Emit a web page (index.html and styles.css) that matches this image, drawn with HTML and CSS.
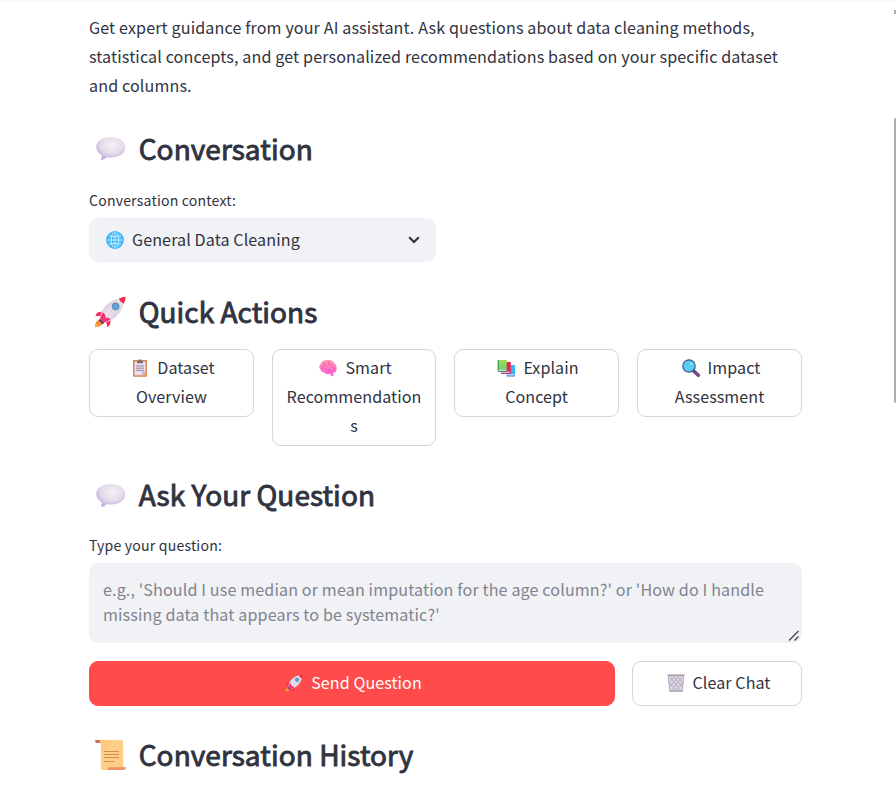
FILE: index.html
```html
<!DOCTYPE html>
<html lang="en">
<head>
<meta charset="utf-8">
<title>AI Assistant</title>
<link rel="stylesheet" href="styles.css">
</head>
<body>
<svg class="defs" aria-hidden="true">
  <defs>
    <radialGradient id="bubble" cx=".55" cy=".35" r=".7"><stop offset="0" stop-color="#f4eff6"/><stop offset=".55" stop-color="#e4dcea"/><stop offset="1" stop-color="#b9a3d6"/></radialGradient>
    <linearGradient id="hull" x1="0" y1="0" x2="1" y2="1"><stop offset="0" stop-color="#c9bccb"/><stop offset=".45" stop-color="#e8dfe9"/><stop offset="1" stop-color="#d5cbdc"/></linearGradient>
    <linearGradient id="flame" x1="1" y1="0" x2="0" y2="1"><stop offset="0" stop-color="#f0682f"/><stop offset="1" stop-color="#ffb04a"/></linearGradient>
    <linearGradient id="fin" x1="0" y1="0" x2="1" y2="1"><stop offset="0" stop-color="#f5325c"/><stop offset="1" stop-color="#fb2b86"/></linearGradient>
    <linearGradient id="brain" x1="0" y1="0" x2="0" y2="1"><stop offset="0" stop-color="#ff96a8"/><stop offset="1" stop-color="#fa5ce4"/></linearGradient>
    <linearGradient id="green" x1="0" y1="0" x2="0" y2="1"><stop offset="0" stop-color="#a5de4c"/><stop offset="1" stop-color="#69d07c"/></linearGradient>
    <linearGradient id="paper" x1="0" y1="0" x2="1" y2="1"><stop offset="0" stop-color="#ffc073"/><stop offset=".4" stop-color="#ffd08a"/><stop offset="1" stop-color="#ffcd80"/></linearGradient>
    <symbol id="i-speech" viewBox="0 0 32 32">
      <path d="M16.2 4.5C24.5 4.5 30.5 8.5 30.5 14.8S24.5 25 16.5 25C14.8 25 13.3 25 12 24.8C10.8 26.3 8.6 27.3 6.9 27.4C6.3 27.4 6.4 26.9 6.6 26.4C7.1 25.2 7.2 23.8 6.9 22.7C3.5 20.9 1.5 18 1.5 14.8C1.5 8.5 8 4.5 16.2 4.5Z" transform="translate(.7 .5)" fill="url(#bubble)"/>
    </symbol>
    <symbol id="i-rocket" viewBox="0 0 32 32">
      <path d="M5.5 23.5C2.5 24.2 1 27 .7 31.2C5 31.4 8.4 29.6 9.5 26.8Z" fill="url(#flame)"/>
      <path d="M10 15.2L4.2 16.2C2.8 17.2 1.6 18.9 1.5 20.1L7.3 20.1ZM17 22.2L16.2 27.7C15.5 29.3 14.6 30.6 13.4 31.2L12 25.2Z" fill="#f52a62"/>
      <path d="M6.1 22.5L10.4 26.9L8.8 28.1L4.9 24.3Z" fill="#40366c"/>
      <path d="M26 2.4C19 3.2 10.5 8 7 17L6 22.6L10.1 26.6L16 25C25.5 20.2 29.2 12 30 6.1Z" fill="url(#hull)"/>
      <path d="M8.5 16.4L6 22.6L10.1 26.6L16.5 23.8C15.5 21.5 13 21.5 11.5 22C11.8 20 11.5 17.5 8.5 16.4Z" fill="url(#fin)"/>
      <path d="M25 2.5C27.5 1.1 30.1 .7 31.4 1C31.7 2.7 31.1 5.4 29.8 7.4C27.8 7.1 25.5 5 25 2.5Z" fill="#f5274e"/>
      <circle cx="21.6" cy="10.4" r="3.8" fill="#7885a5"/><circle cx="21.6" cy="10.6" r="2.7" fill="#4daaf5"/>
    </symbol>
    <symbol id="i-globe" viewBox="0 0 18 18">
      <circle cx="9" cy="9" r="8.8" fill="#46b8fa"/>
      <g fill="none" stroke="#c6edff" stroke-width="1"><ellipse cx="9" cy="9" rx="3.8" ry="8.1"/><path d="M9 1V17M1 9H17M3 4.8Q9 6.7 15 4.8M3 13.2Q9 11.3 15 13.2"/></g>
      <circle cx="9" cy="9" r="8.3" fill="none" stroke="#49b4f8"/>
    </symbol>
    <symbol id="i-clipboard" viewBox="0 0 18 18">
      <path d="M2 1H16V17.8H2Z" fill="#dd8a59"/><path d="M3.6 2.7H14.5V16.2H3.6Z" fill="#e9e0f2"/>
      <path d="M14.5 12.5V16.2H10.8Z" fill="#f0a36e"/><path d="M10.8 12.5H14.5L10.8 16.2Z" fill="#c9b9df"/>
      <path d="M6 2H7.6V.5H10.4V2H12V4.3H6Z" fill="#77717f"/>
      <path d="M5 7H13M5 9.2H13M5 11.4H13" stroke="#948aa3" stroke-width="1"/>
    </symbol>
    <symbol id="i-brain" viewBox="0 0 18 18">
      <path d="M9 1C12 .6 14.7 2 15.5 4.4C17.6 5.8 18 8.5 17.5 11C17 13 15.5 14 14 14L14.5 16.7L12.8 17.4L11 14.6C8.5 15.7 6.5 15 5.5 13.5C3 13.4 1.5 12 1.5 10.5C-.3 8.8 .1 6 1.7 5C2.5 2 5.5 .8 9 1Z" fill="url(#brain)"/>
      <path d="M5 4Q7 6 6 8M9 3Q9 6 12 5.5M2.5 9Q5 8 6.5 10T11 10M13 8Q16 8 15.5 11M9 12.5Q12 11 14 12.5" fill="none" stroke="#ed4dae" stroke-width=".8"/>
    </symbol>
    <symbol id="i-books" viewBox="0 0 18 18">
      <path d="M9.5 6H18V16.8H9.5Z" fill="#38b5f5"/><path d="M9.5 15.2H17.5V16.8H9.5Z" fill="#efe0ff"/><path d="M9.5 16.5H18V17.5H9.5Z" fill="#257fd0"/>
      <path d="M4 3H13.8V14H4Z" fill="#e9244e"/><path d="M4 12.7H13V14H4Z" fill="#f3d9ee"/><path d="M4 13.8H13.8V14.8H4Z" fill="#a21d57"/>
      <path d="M.7 1H9.7V11.5H.7Z" fill="url(#green)"/><path d="M.7 1H1.8V11.7H.7Z" fill="#3e9b57"/><path d="M1.5 10.7H9.4V12H1.5Z" fill="#e7e3ef"/><path d="M.7 11.8H9.7V12.8H.7Z" fill="#2f8b68"/>
    </symbol>
    <symbol id="i-lens" viewBox="0 0 18 18">
      <path d="M12 12.3L16.3 16.3" stroke="#7c457f" stroke-width="3.6" stroke-linecap="round"/><path d="M10.8 11.2L12.5 12.9" stroke="#4b4071" stroke-width="2"/>
      <circle cx="7" cy="7" r="6.2" fill="#5bcdf0" stroke="#385a94" stroke-width="1.2"/><circle cx="9.3" cy="4.7" r="1.2" fill="#a8eafa"/>
    </symbol>
    <symbol id="i-bin" viewBox="0 0 18 18">
      <path d="M1.1 2H17L15.7 17.5H2.6Z" fill="#dfd9e6"/>
      <path d="M3 3L14 17M7 3L15 13M11 3L15.8 9M2.5 8L9.5 17M15.3 3L4 17M11 3L2.8 13M7 3L2.5 8M15.5 8L9 17" stroke="#aaa2b6" stroke-width=".8"/>
      <path d="M2.5 17H15.7" stroke="#aaa3b6" stroke-width="1.5"/><path d="M1.3 3L2.8 17M16.6 3L15.3 17" stroke="#b2aabd"/>
      <path d="M.4 1.3H17.7" stroke="#aaa2b0" stroke-width="1.8"/>
    </symbol>
    <symbol id="i-scroll" viewBox="0 0 32 32">
      <g transform="translate(.5 0)">
      <path d="M.7 1H6V4H1.8C.8 3.7.5 2 .7 1Z" fill="#d06d4c"/>
      <path d="M3.8 1H27C28.2 1.3 28.7 2.2 28.7 3.5V31H8C7 31 6.4 29.8 6.4 28.8V4C6.4 2.5 5.4 1.2 3.8 1Z" fill="url(#paper)"/>
      <path d="M13.3 28.3H31.5C31.5 30 30.4 31 29.2 31H12.5C13.3 30.2 13.6 29.2 13.3 28.3Z" fill="#ec936c"/>
      <path d="M9.5 12.5H24.5M9.5 15.5H24.5M9.5 18.5H24.5M9.5 22.5H19.5" stroke="#d98755"/>
      </g>
    </symbol>
  </defs>
</svg>
<main class="page">
  <p class="intro">Get expert guidance from your AI assistant. Ask questions about data cleaning methods,<br>statistical concepts, and get personalized recommendations based on your specific dataset<br>and columns.</p>

  <h2><svg><use href="#i-speech"/></svg><span>Conversation</span></h2>
  <div class="label">Conversation context:</div>
  <div class="select"><svg class="icon"><use href="#i-globe"/></svg><span>General Data Cleaning</span>
    <svg class="chevron" viewBox="0 0 12 8"><path d="M1.2 1.3L6 6L10.8 1.3" fill="none" stroke="#31333f" stroke-width="2.2"/></svg></div>

  <h2 class="actions-title"><svg><use href="#i-rocket"/></svg><span>Quick Actions</span></h2>
  <div class="actions">
    <button><svg class="icon"><use href="#i-clipboard"/></svg>Dataset<br>Overview</button>
    <button><svg class="icon"><use href="#i-brain"/></svg>Smart<br>Recommendation<br>s</button>
    <button><svg class="icon"><use href="#i-books"/></svg>Explain<br>Concept</button>
    <button><svg class="icon"><use href="#i-lens"/></svg>Impact<br>Assessment</button>
  </div>

  <h2 class="ask-title"><svg><use href="#i-speech"/></svg><span>Ask Your Question</span></h2>
  <div class="label ask-label">Type your question:</div>
  <div class="question">e.g., 'Should I use median or mean imputation for the age column?' or 'How do I handle<br>missing data that appears to be systematic?'
    <svg class="grip" viewBox="0 0 12 12"><path d="M1 10.5L10.5 1M6.5 10.5L10.5 6.5" stroke="#4b4b52" stroke-width="1.4"/></svg></div>
  <div class="submit">
    <button class="primary"><svg class="icon"><use href="#i-rocket"/></svg>Send Question</button>
    <button><svg class="icon"><use href="#i-bin"/></svg>Clear Chat</button>
  </div>

  <h2 class="history-title"><svg><use href="#i-scroll"/></svg><span>Conversation History</span></h2>
</main>
<div class="scrollbar"><div class="arrow"></div><div class="thumb"></div></div>
</body>
</html>
```
FILE: styles.css
```css
* { box-sizing: border-box; }
html, body { margin: 0; height: 791px; overflow: hidden; }
body {
  background: #fff;
  color: #31333f;
  font-family: "Noto Sans CJK SC", sans-serif;
  font-size: 16.1px;
  border-top: 2px solid #fafafa;
}
.defs { position: absolute; width: 0; height: 0; }
.page { width: 713px; margin-left: 89px; padding-top: 11px; }
.intro { margin: 0; line-height: 29px; letter-spacing: .13px; white-space: nowrap; }
h2 {
  display: flex;
  align-items: center;
  height: 36px;
  margin: 30px 0 0;
  font-size: 28px;
  font-weight: 400;
  line-height: 36px;
  letter-spacing: .06px;
  white-space: nowrap;
  -webkit-text-stroke: .9px #31333f;
}
h2 svg { width: 32px; height: 32px; margin: 0 12.7px 0 5px; flex: none; }
h2 span { padding-bottom: 1px; }
.actions-title span, .ask-title span, .history-title span { padding-bottom: 2px; }
.label { height: 20px; margin-top: 24px; font-size: 14.1px; line-height: 20px; letter-spacing: .18px; }
.select {
  display: flex;
  align-items: center;
  width: 347px;
  height: 44px;
  margin-top: 8px;
  padding: 0 16.5px 0 14px;
  border-radius: 9px;
  background: #f0f2f6;
  letter-spacing: .1px;
}
.select span { padding-bottom: 2px; }
.icon { width: 18px; height: 18px; margin: 0 8px 0 3px; vertical-align: -3px; flex: none; }
.chevron { width: 12px; height: 8px; margin-left: auto; }
.actions-title { margin-top: 32px; }
.actions {
  display: grid;
  grid-template-columns: 165px 164px 165px 165px;
  justify-content: space-between;
  align-items: start;
  margin-top: 19px;
}
button {
  margin: 0;
  padding: 3px 0 5px;
  border: 1px solid #d6d6d9;
  border-radius: 9px;
  background: #fff;
  color: inherit;
  font: inherit;
  letter-spacing: .06px;
  line-height: 29px;
  white-space: nowrap;
}
.ask-title { margin-top: 31px; }
.ask-label { margin-top: 22px; }
.question {
  position: relative;
  height: 80px;
  margin-top: 8px;
  padding: 14px;
  border-radius: 9px;
  background: #f0f2f6;
  color: #83848c;
  line-height: 25px;
  letter-spacing: .135px;
  white-space: nowrap;
}
.grip { position: absolute; right: 2px; bottom: 1px; width: 12px; height: 12px; }
.submit { display: grid; grid-template-columns: 526px 170px; gap: 17px; margin-top: 18px; }
.submit button { height: 45px; }
.submit .primary { border-color: #ff4b4b; background: #ff4b4b; color: #fff; }
.history-title { margin-top: 31px; }
.scrollbar { position: absolute; top: 0; right: 0; width: 2px; height: 791px; }
.arrow { width: 2px; height: 4px; margin-top: 10px; background: #b0b0b0; }
.thumb { height: 285px; margin-top: 104px; border-radius: 2px 0 0 2px; background: #adadad; }
```
